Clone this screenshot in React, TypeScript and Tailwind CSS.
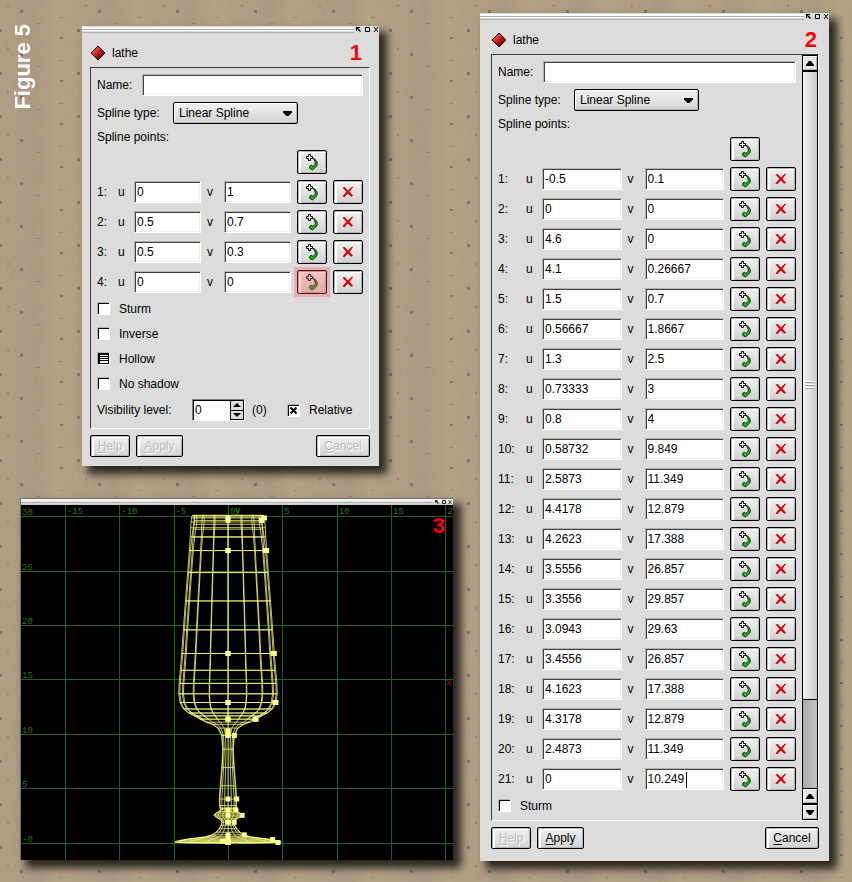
import type { ReactNode } from "react";

type Point = [string, string];

const simplePoints: Point[] = [
  ["0", "1"],
  ["0.5", "0.7"],
  ["0.5", "0.3"],
  ["0", "0"],
];

const glassPoints: Point[] = [
  ["-0.5", "0.1"],
  ["0", "0"],
  ["4.6", "0"],
  ["4.1", "0.26667"],
  ["1.5", "0.7"],
  ["0.56667", "1.8667"],
  ["1.3", "2.5"],
  ["0.73333", "3"],
  ["0.8", "4"],
  ["0.58732", "9.849"],
  ["2.5873", "11.349"],
  ["4.4178", "12.879"],
  ["4.2623", "17.388"],
  ["3.5556", "26.857"],
  ["3.3556", "29.857"],
  ["3.0943", "29.63"],
  ["3.4556", "26.857"],
  ["4.1623", "17.388"],
  ["4.3178", "12.879"],
  ["2.4873", "11.349"],
  ["0", "10.249"],
];

function Backdrop() {
  return (
    <svg className="absolute inset-0 -z-10 h-full w-full" aria-hidden="true">
      <defs>
        <filter id="weave" x="0" y="0" width="100%" height="100%">
          <feTurbulence type="fractalNoise" baseFrequency="0.35 0.1" numOctaves="3" seed="4" />
          <feColorMatrix values="0 0 0 0 0.4  0 0 0 0 0.33  0 0 0 0 0.25  2 0 0 0 -0.7" />
        </filter>
        <linearGradient id="band">
          <stop offset="0" stopColor="#a08478" stopOpacity="0" />
          <stop offset="0.45" stopColor="#a08478" stopOpacity="0.25" />
          <stop offset="0.75" stopColor="#b8ac86" stopOpacity="0.3" />
          <stop offset="1" stopColor="#b8ac86" stopOpacity="0" />
        </linearGradient>
        <pattern id="dots" width="78" height="43" patternUnits="userSpaceOnUse">
          <rect width="78" height="43" fill="url(#band)" />
          <g fill="#7c5a5c" opacity="0.7">
            <rect x="0" y="29" width="2" height="3" />
            <rect x="77" y="29" width="1" height="3" />
            <rect x="20" y="10" width="3" height="3" />
            <rect x="60" y="37" width="3" height="2" />
          </g>
          <g fill="#8a6a5c" opacity="0.5">
            <rect x="7" y="5" width="2" height="2" />
            <rect x="36" y="23" width="4" height="1" />
            <rect x="59" y="17" width="4" height="1" />
          </g>
        </pattern>
      </defs>
      <rect width="100%" height="100%" fill="#b2a084" />
      <rect width="100%" height="100%" filter="url(#weave)" opacity="0.6" />
      <rect width="100%" height="100%" fill="url(#dots)" />
    </svg>
  );
}

function TitleBar() {
  return (
    <div className="flex h-[7px] items-start gap-px">
      <div className="mt-px flex-1">
        <div className="h-[3px] border-t border-b border-t-white border-b-[#b0b0b0] bg-white" />
        <div className="h-[3px] border-t border-b border-t-white border-b-[#b0b0b0] bg-[#dcdcdc]" />
      </div>
      <svg width="24" height="7" viewBox="0 0 24 7" fill="none" stroke="#000" aria-hidden="true">
        <path d="M1 1h4v1H3l3 3-1 1-3-3v2H1z" fill="#000" stroke="none" />
        <path d="M10.500 1.500h4v4h-4z" />
        <path d="M19 1l4 5M23 1l-4 5" />
      </svg>
    </div>
  );
}

function Heading({ number, inset }: { number: string; inset: string }) {
  return (
    <div className={`flex h-[34px] items-center pt-1.5 ${inset}`}>
      <svg width="16" height="16" viewBox="0 0 16 16" aria-hidden="true">
        <defs>
          <linearGradient id="ruby" x1="0" y1="0" x2="1" y2="1">
            <stop offset="0.2" stopColor="#f06060" />
            <stop offset="0.5" stopColor="#c01818" />
            <stop offset="0.85" stopColor="#600000" />
          </linearGradient>
        </defs>
        <path d="M8 1l7 7-7 7-7-7z" fill="url(#ruby)" stroke="#200000" />
      </svg>
      <h2 className="ml-1.5 flex-1">lathe</h2>
      <span className="text-[22px] leading-6 font-bold text-[#ff0000]">{number}</span>
    </div>
  );
}

const face =
  "relative flex items-center justify-center rounded-xs border border-black bg-linear-to-b from-[#f2f2f2] to-[#d2d2d2] shadow-[inset_1px_1px_0_#b4b4b4,inset_3px_2px_0_#ffffff,inset_-1px_-1px_0_#b4b4b4]";

function AddButton({ marked = false }: { marked?: boolean }) {
  return (
    <button type="button" aria-label="Add point" className={`${face} h-6 w-[30px] shrink-0`}>
      <svg width="12" height="17" viewBox="0 0 12 17" aria-hidden="true">
        <path
          d="M7 4.300C9.300 5 11 7 11.300 9.300 11.500 11.500 10 13.300 8.300 14.200L6.500 16 3.500 14.200 4 12 5.500 11.200 6.500 12.300C8.600 11.600 9.600 10 9.200 8.300 8.900 6.800 8 5.500 7 4.300z"
          fill="#10c010"
          stroke="#001c00"
          strokeWidth="0.9"
        />
        <path d="M2.500.5h2v2h2v2h-2v2h-2v-2h-2v-2h2z" fill="#fff" stroke="#000" />
      </svg>
      {marked && <span className="absolute -inset-1 bg-[#ff5050]/30" />}
    </button>
  );
}

function RemoveButton() {
  return (
    <button type="button" aria-label="Remove point" className={`${face} h-6 w-[30px] shrink-0`}>
      <svg width="12" height="12" viewBox="0 0 12 12" aria-hidden="true">
        <path d="M.5 1.500l2.200-.4 3.200 3.400L9.800.8h1.500L7.500 5.800l3.600 4-1.900 1L5.800 7.500 2.300 11.200.5 10.500l3.800-4.700z" fill="#dc0000" />
      </svg>
    </button>
  );
}

function TextField({ label, value = "", caret = false }: { label: string; value?: string; caret?: boolean }) {
  return (
    <span className="relative flex h-[22px] min-w-0 flex-1">
      <input
        aria-label={label}
        defaultValue={value}
        className="h-full w-full min-w-0 border border-t-[#b4b4b4] border-r-white border-b-white border-l-[#b4b4b4] bg-white pl-0.5 shadow-[inset_1px_1px_0_#404040,inset_-1px_-1px_0_#efefef] outline-none"
      />
      {caret && <span className="absolute top-1 left-[41px] h-4 w-px bg-black" />}
    </span>
  );
}

function Tick({ label, state = "off" }: { label: string; state?: "off" | "on" | "mixed" }) {
  return (
    <label className="flex h-[25px] items-center gap-[9px]">
      <span className="relative flex">
        <input
          type="checkbox"
          defaultChecked={state === "on"}
          className="size-[13px] appearance-none border border-t-[#b4b4b4] border-r-white border-b-white border-l-[#b4b4b4] bg-white shadow-[inset_1px_1px_0_#000000]"
        />
        {state !== "off" && (
          <svg className="pointer-events-none absolute inset-0" width="13" height="13" viewBox="0 0 13 13" stroke="#000" aria-hidden="true">
            {state === "on" ? (
              <path d="M3.500 3.500l6 6M9.500 3.500l-6 6" strokeWidth="2" />
            ) : (
              <path d="M1.500 1v11M2.500 1v11M11.500 1v11M1 1.500h10M1 2.500h10M1 4.500h10M1 6.500h10M1 8.500h10M1 11.500h10" />
            )}
          </svg>
        )}
      </span>
      {label}
    </label>
  );
}

function NameAndType({ id }: { id: string }) {
  return (
    <>
      <div className="flex items-center">
        <span className="w-[45px] shrink-0">Name:</span>
        <TextField label="Name" />
      </div>
      <div className="mt-1.5 flex items-center">
        <label htmlFor={id} className="w-[76px] shrink-0">
          Spline type:
        </label>
        <span className="relative flex">
          <select
            id={id}
            className="h-[22px] w-[125px] appearance-none rounded-xs border border-black bg-linear-to-b from-[#f2f2f2] to-[#d2d2d2] pl-[5px] shadow-[inset_1px_1px_0_#ffffff,inset_-1px_-1px_0_#b4b4b4] outline-none"
          >
            <option>Linear Spline</option>
          </select>
          <svg className="pointer-events-none absolute top-[9px] right-[5px]" width="10" height="6" viewBox="0 0 10 6" aria-hidden="true">
            <path d="M0 0h9v1.500L5.500 5h-2L0 1.500z" />
          </svg>
        </span>
      </div>
      <div className="flex h-[26px] items-center">Spline points:</div>
    </>
  );
}

interface PointRowsProps {
  points: Point[];
  numberWidth: string;
  marked?: number;
  caret?: number;
}

function PointRows({ points, numberWidth, marked, caret }: PointRowsProps) {
  return (
    <div className="flex flex-col gap-1.5">
      <div className="flex justify-end pr-9">
        <AddButton />
      </div>
      {points.map(([u, v], i) => (
        <div key={i} className="flex items-center">
          <span className={`${numberWidth} shrink-0`}>{i + 1}:</span>
          <span className="w-4 shrink-0">u</span>
          <TextField label={`Point ${i + 1} u`} value={u} />
          <span className="w-[23px] shrink-0 pl-1.5">v</span>
          <TextField label={`Point ${i + 1} v`} value={v} caret={caret === i + 1} />
          <span className="flex gap-1.5 pl-1.5">
            <AddButton marked={marked === i + 1} />
            <RemoveButton />
          </span>
        </div>
      ))}
    </div>
  );
}

function TextButton({ width, disabled = false, children }: { width: string; disabled?: boolean; children: string }) {
  return (
    <button
      type="button"
      disabled={disabled}
      className={`${face} ${width} h-[22px] disabled:text-[#b8b8b8] disabled:[text-shadow:1px_1px_0_#ffffff]`}
    >
      <span>
        <span className="underline underline-offset-2">{children[0]}</span>
        {children.slice(1)}
      </span>
    </button>
  );
}

function DialogButtons({ canEdit = false }: { canEdit?: boolean }) {
  return (
    <div className="mt-1.5 flex gap-1.5">
      <TextButton width="w-10" disabled>
        Help
      </TextButton>
      <TextButton width="w-[47px]" disabled={!canEdit}>
        Apply
      </TextButton>
      <span className="flex-1" />
      <TextButton width="w-[54px]" disabled={!canEdit}>
        Cancel
      </TextButton>
    </div>
  );
}

const windowShadow = "shadow-[7px_7px_8px_1px_rgba(20,18,14,0.85)]";

function Frame({ children }: { children: ReactNode }) {
  return (
    <div className="flex flex-1 border border-t-[#404040] border-r-white border-b-white border-l-[#404040]">
      {children}
    </div>
  );
}

function SimpleLathe() {
  return (
    <section className={`flex flex-1 flex-col bg-[#dcdcdc] ${windowShadow}`}>
      <TitleBar />
      <div className="flex flex-1 flex-col pr-[9px] pb-[9px] pl-2">
        <Heading number="1" inset="pr-2" />
        <Frame>
          <div className="flex-1 px-1.5 pt-1.5 pb-1">
            <NameAndType id="simple-spline" />
            <PointRows points={simplePoints} numberWidth="w-[21px]" marked={4} />
            <div className="mt-0.5">
              <Tick label="Sturm" />
              <Tick label="Inverse" />
              <Tick label="Hollow" state="mixed" />
              <Tick label="No shadow" />
            </div>
            <div className="flex h-7 items-center">
              <label htmlFor="visibility" className="w-[95px]">
                Visibility level:
              </label>
              <span className="flex h-[22px] w-[53px] border border-t-[#808080] border-r-white border-b-white border-l-[#808080] bg-white shadow-[inset_1px_1px_0_#000000]">
                <input id="visibility" defaultValue="0" className="w-0 flex-1 pl-0.5 outline-none" />
                <span className="flex w-[14px] flex-col border border-black bg-[#dcdcdc]">
                  <button type="button" aria-label="Increase" className="flex flex-1 items-center justify-center border-b border-black">
                    <svg width="8" height="4" viewBox="0 0 8 4" aria-hidden="true">
                      <path d="M4 0l4 4H0z" />
                    </svg>
                  </button>
                  <button type="button" aria-label="Decrease" className="flex flex-1 items-center justify-center">
                    <svg width="8" height="4" viewBox="0 0 8 4" aria-hidden="true">
                      <path d="M0 0h8L4 4z" />
                    </svg>
                  </button>
                </span>
              </span>
              <span className="w-[42px] pl-[7px]">(0)</span>
              <Tick label="Relative" state="on" />
            </div>
          </div>
        </Frame>
        <DialogButtons />
      </div>
    </section>
  );
}

function ScrollArrow({ down = false }: { down?: boolean }) {
  return (
    <button
      type="button"
      aria-label={down ? "Scroll down" : "Scroll up"}
      className="flex h-4 shrink-0 items-center justify-center border border-black bg-[#e6e6e6] shadow-[inset_1px_1px_0_#ffffff,inset_-1px_-1px_0_#b4b4b4]"
    >
      <svg width="8" height="5" viewBox="0 0 8 5" aria-hidden="true">
        <path d={down ? "M0 0h8v1L5 5H3L0 1z" : "M3 0h2l3 4v1H0V4z"} />
      </svg>
    </button>
  );
}

function Scrollbar() {
  return (
    <div className="flex w-4 shrink-0 flex-col">
      <ScrollArrow />
      <div className="flex grow-[7] items-center justify-center border border-black bg-linear-to-r from-[#f4f4f4] to-[#cccccc]">
        <div className="flex w-2.5 flex-col gap-px">
          <span className="h-0.5 border-t border-b border-t-white border-b-[#a0a0a0]" />
          <span className="h-0.5 border-t border-b border-t-white border-b-[#a0a0a0]" />
          <span className="h-0.5 border-t border-b border-t-white border-b-[#a0a0a0]" />
        </div>
      </div>
      <div className="grow border-x border-black bg-linear-to-r from-[#a8a8a8] to-[#c4c4c4]" />
      <ScrollArrow />
      <ScrollArrow down />
    </div>
  );
}

function GlassLathe() {
  return (
    <section className={`flex flex-col bg-[#dcdcdc] ${windowShadow}`}>
      <TitleBar />
      <div className="flex flex-1 flex-col pr-2.5 pb-3 pl-[11px]">
        <Heading number="2" inset="pr-0.5" />
        <Frame>
          <div className="flex-1 px-1.5 pt-1.5">
            <NameAndType id="glass-spline" />
            <PointRows points={glassPoints} numberWidth="w-7" caret={21} />
            <div className="mt-0.5">
              <Tick label="Sturm" />
            </div>
          </div>
          <Scrollbar />
        </Frame>
        <DialogButtons canEdit />
      </div>
    </section>
  );
}

// view transform: 10.87px per unit, origin at the foot of the glass
const SCALE = 10.87;
const toX = (u: number) => 208 + u * SCALE;
const toY = (v: number) => 338.5 - v * SCALE;

// Catmull-Rom, four steps per span; the end points are only controls
function sampleProfile(points: number[][]) {
  const out: number[][] = [];
  for (let i = 1; i < points.length - 2; i++) {
    for (let step = 0; step < 4; step++) {
      const t = step / 4;
      out.push(
        [0, 1].map((k) => {
          const [a, b, c, d] = [points[i - 1][k], points[i][k], points[i + 1][k], points[i + 2][k]];
          return (
            0.5 *
            (2 * b + (c - a) * t + (2 * a - 5 * b + 4 * c - d) * t * t + (3 * b - a - 3 * c + d) * t * t * t)
          );
        })
      );
    }
  }
  out.push(points[points.length - 2]);
  return out;
}

const controls = glassPoints.map(([u, v]) => [Number(u), Number(v)]);
const profile = sampleProfile(controls);
const meridians = [0, 1, 2, 3, 4, 5, 6, 7, 8].map((n) => Math.cos((n * Math.PI) / 8));
const columns = [-15, -10, -5, 0, 5, 10, 15, 20];
const rows = [30, 25, 20, 15, 10, 5, 0];

function WireView() {
  return (
    <section className={`relative border-t border-l border-[#707070] bg-black ${windowShadow}`}>
      <div className="flex h-[6px] items-center bg-linear-to-b from-white to-[#c8c8c8]">
        <span className="h-px flex-1 bg-[#b0b0b0]" />
        <svg width="19" height="6" viewBox="0 0 19 6" fill="none" stroke="#222" aria-hidden="true">
          <path d="M1 1h3L3 2l2 2-1 1-2-2-1 1z" fill="#222" stroke="none" />
          <path d="M8.500 1.500h3v3h-3z" />
          <path d="M14.500 1l3 4M17.500 1l-3 4" strokeWidth="0.8" />
        </svg>
      </div>
      <svg className="block w-full" viewBox="1 1 432 355" role="img" aria-label="Wireframe of a glass">
        <g stroke="#1e641e" strokeWidth="1">
          {columns.map((u) => (
            <path key={u} d={`M${Math.round(toX(u)) + 0.5} 0V356`} />
          ))}
          {rows.map((v) => (
            <path key={v} d={`M0 ${Math.round(toY(v)) + 0.5}H433`} />
          ))}
        </g>
        <g fill="#267426" fontFamily="Liberation Mono" fontSize="9">
          {columns.map((u) => (
            <text key={u} x={toX(u) + 2} y="10">
              {u === 20 ? "2" : u}
            </text>
          ))}
          {rows.map((v) => (
            <text key={v} x="2" y={toY(v) - 1}>
              {v === 0 ? "-0" : v}
            </text>
          ))}
          <text x="215" y="9" fill="#00c800">
            y
          </text>
          <text x="426" y="181" fill="#c00000">
            x
          </text>
        </g>
        <g fill="none" stroke="#ffff80" strokeOpacity="0.75">
          {meridians.map((m, i) => (
            <polyline key={i} points={profile.map(([u, v]) => `${toX(u * m)},${toY(v)}`).join(" ")} />
          ))}
          {profile.map(([u, v], i) => (
            <path key={i} d={`M${toX(-u)} ${toY(v)}H${toX(u)}`} />
          ))}
        </g>
        <g fill="#ffff90">
          {controls.map(([u, v], i) => (
            <g key={i}>
              <rect x={toX(u) - 2.5} y={toY(v) - 2.5} width="5" height="5" />
              <rect x={toX(0) - 2.5} y={toY(v) - 2.5} width="5" height="5" />
            </g>
          ))}
        </g>
        <rect x="216" y="339" width="1" height="2" fill="#d00000" />
      </svg>
      <span className="absolute top-[15px] right-2 text-[22px] leading-6 font-bold text-[#ff0000]">3</span>
    </section>
  );
}

export default function App() {
  return (
    <main className="relative isolate grid min-h-screen grid-cols-[442fr_349fr] gap-[27px] pt-[13px] pr-[23px] pb-[21px] pl-[11px] font-['Liberation_Sans',Arial,sans-serif] text-xs text-black">
      <Backdrop />
      <div className="flex min-w-0 flex-col justify-between">
        <div className="flex items-start pt-[13px] pr-[74px]">
          <h1 className="mr-[47px] -mt-0.5 w-6 rotate-180 text-[22px] leading-6 font-bold text-white [writing-mode:vertical-rl]">
            Figure 5
          </h1>
          <SimpleLathe />
        </div>
        <div className="pb-px pl-[9px]">
          <WireView />
        </div>
      </div>
      <GlassLathe />
    </main>
  );
}
